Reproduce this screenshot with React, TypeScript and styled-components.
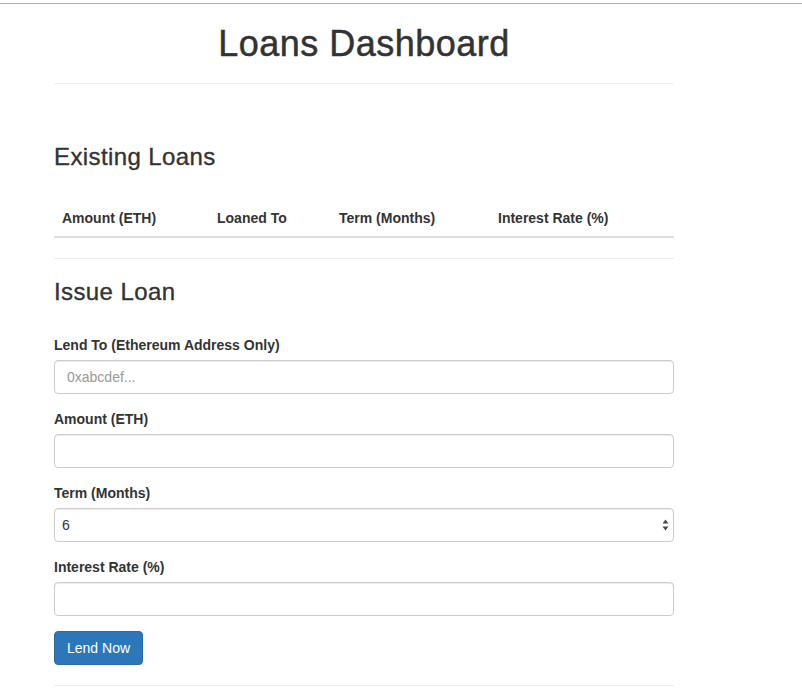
import React from "react";
import styled, { createGlobalStyle } from "styled-components";

const GlobalStyle = createGlobalStyle`
  html, body {
    margin: 0;
    padding: 0;
    background: #fff;
  }
  body {
    font-family: "Liberation Sans", Arial, Helvetica, sans-serif;
    font-size: 14px;
    line-height: 1.42857143;
    color: #333;
  }
  * { box-sizing: border-box; }
`;

const Page = styled.div`
  padding-top: 3px;
`;

const Frame = styled.div`
  border-top: 1px solid #b2b2b2;
  padding-left: 54px;
`;

const Container = styled.div`
  width: 620px;
`;

const PageHeader = styled.header`
  padding: 20px 0 9px;
  border-bottom: 1px solid #eee;
`;

const Title = styled.h1`
  margin: 0 0 10px;
  font-size: 36px;
  font-weight: 500;
  line-height: 1.1;
  letter-spacing: 0.5px;
  text-align: center;
  color: #333;
  -webkit-text-stroke: 0.5px #333;
`;

const Section = styled.section<{ $top: number }>`
  padding-top: ${(p) => p.$top}px;
`;

const SectionTitle = styled.h3`
  margin: 0;
  font-size: 24px;
  font-weight: 500;
  line-height: 1.1;
  letter-spacing: 0.4px;
  color: #333;
  -webkit-text-stroke: 0.35px #333;
`;

const Table = styled.table`
  width: 100%;
  margin-top: 30px;
  border-collapse: collapse;
  border-spacing: 0;
`;

const Th = styled.th<{ $w: number }>`
  width: ${(p) => p.$w}px;
  padding: 8px;
  line-height: 20px;
  text-align: left;
  vertical-align: bottom;
  font-weight: 700;
  border-bottom: 2px solid #ddd;
`;

const Divider = styled.hr`
  margin: 20px 0;
  border: 0;
  border-top: 1px solid #eee;
  height: 0;
`;

const Form = styled.form`
  margin-top: 30px;
`;

const FormGroup = styled.div`
  margin-bottom: 15px;
`;

const Label = styled.label`
  display: block;
  margin-bottom: 5px;
  font-weight: 700;
  line-height: 20px;
`;

const Input = styled.input`
  display: block;
  width: 100%;
  height: 34px;
  padding: 6px 12px;
  font-family: inherit;
  font-size: 14px;
  line-height: 1.42857143;
  color: #555;
  background: #fff;
  border: 1px solid #ccc;
  border-radius: 4px;
  box-shadow: inset 0 1px 1px rgba(0, 0, 0, 0.075);
  outline: none;
  &::placeholder {
    color: #999;
  }
`;

const SelectWrap = styled.div`
  position: relative;
`;

const Select = styled.select`
  display: block;
  width: 100%;
  height: 34px;
  padding: 6px 24px 6px 7px;
  font-family: inherit;
  font-size: 14px;
  color: #333;
  background: #fff;
  border: 1px solid #ccc;
  border-radius: 4px;
  box-shadow: inset 0 1px 1px rgba(0, 0, 0, 0.075);
  appearance: none;
  -webkit-appearance: none;
  outline: none;
`;

const SelectArrows = styled.svg`
  position: absolute;
  right: 5px;
  top: 11px;
  width: 7px;
  height: 12px;
  pointer-events: none;
`;

const Button = styled.button`
  display: inline-block;
  padding: 6px 12px;
  font-family: inherit;
  font-size: 14px;
  line-height: 1.42857143;
  color: #fff;
  background: #2b77b9;
  border: 1px solid #2a6ca6;
  border-radius: 4px;
  cursor: pointer;
`;

const columns = [
  { label: "Amount (ETH)", w: 155 },
  { label: "Loaned To", w: 122 },
  { label: "Term (Months)", w: 159 },
  { label: "Interest Rate (%)", w: 184 },
];

export default function App() {
  return (
    <Page>
      <GlobalStyle />
      <Frame>
        <Container>
          <PageHeader>
            <Title>Loans Dashboard</Title>
          </PageHeader>

          <Section $top={60}>
            <SectionTitle>Existing Loans</SectionTitle>
            <Table>
              <thead>
                <tr>
                  {columns.map((c) => (
                    <Th key={c.label} $w={c.w}>
                      {c.label}
                    </Th>
                  ))}
                </tr>
              </thead>
              <tbody />
            </Table>
          </Section>

          <Divider />

          <Section $top={0}>
            <SectionTitle>Issue Loan</SectionTitle>
            <Form onSubmit={(e) => e.preventDefault()}>
              <FormGroup>
                <Label htmlFor="lendTo">Lend To (Ethereum Address Only)</Label>
                <Input id="lendTo" type="text" placeholder="0xabcdef..." />
              </FormGroup>
              <FormGroup>
                <Label htmlFor="amount">Amount (ETH)</Label>
                <Input id="amount" type="text" />
              </FormGroup>
              <FormGroup>
                <Label htmlFor="term">Term (Months)</Label>
                <SelectWrap>
                  <Select id="term" defaultValue="6">
                    <option value="1">1</option>
                    <option value="3">3</option>
                    <option value="6">6</option>
                    <option value="12">12</option>
                    <option value="24">24</option>
                  </Select>
                  <SelectArrows viewBox="0 0 7 12">
                    <path d="M3.5 0.5 L6.5 4.5 L0.5 4.5 Z" fill="#4a4a4a" />
                    <path d="M0.5 7.5 L6.5 7.5 L3.5 11.5 Z" fill="#4a4a4a" />
                  </SelectArrows>
                </SelectWrap>
              </FormGroup>
              <FormGroup>
                <Label htmlFor="rate">Interest Rate (%)</Label>
                <Input id="rate" type="text" />
              </FormGroup>
              <Button type="submit">Lend Now</Button>
            </Form>
          </Section>

          <Divider />
        </Container>
      </Frame>
    </Page>
  );
}
